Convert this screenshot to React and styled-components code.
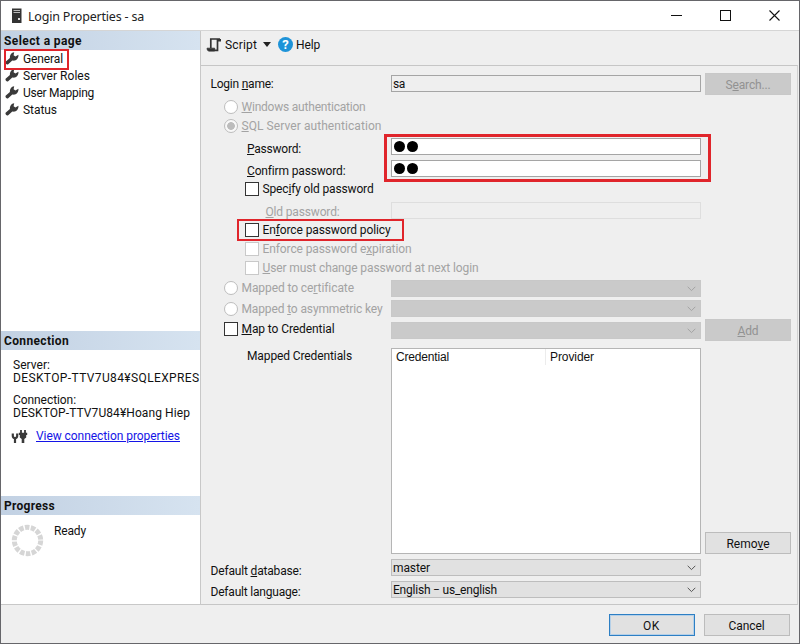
import React, { useLayoutEffect, useRef, useState } from 'react'
import styled, { createGlobalStyle } from 'styled-components'

const GlobalStyle = createGlobalStyle`
    * {
        box-sizing: border-box;
    }
    body {
        margin: 0;
        background: #5c5c5e;
        font-family: Roboto, "Liberation Sans", sans-serif;
        font-size: 12px;
        line-height: 14px;
        color: #111;
    }
    u {
        text-underline-offset: 1px;
    }
`

const Desktop = styled.div`
    width: 800px;
    height: 644px;
    padding: 1px;
    background: #66666a;
    overflow: hidden;
`

const Window = styled.div`
    height: 642px;
    background: #efefef;
    display: flex;
    flex-direction: column;
`

const TitleBar = styled.div`
    height: 30px;
    flex: none;
    background: #fff;
    border-bottom: 1px solid #d5d5d5;
    display: flex;
    align-items: center;
    padding-left: 10px;
`

const Title = styled.div`
    flex: 1;
    padding: 2px 0 0 6px;
    font-family: "Noto Sans", "Open Sans", sans-serif;
    font-size: 12.5px;
    color: #222;
`

const WindowButton = styled.div`
    width: 49px;
    height: 29px;
    display: flex;
    align-items: center;
    justify-content: center;
`

const Body = styled.div`
    height: 574px;
    flex: none;
    display: flex;
`

const Sidebar = styled.div`
    width: 200px;
    flex: none;
    background: #fff;
    border-right: 1px solid #c8c8c8;
    border-bottom: 1px solid #c8c8c8;
    display: flex;
    flex-direction: column;
    overflow: hidden;
`

const Section = styled.div`
    height: ${props => props.$h}px;
    flex: none;
`

const SectionTitle = styled.div`
    height: 19px;
    padding: 3px 0 0 3px;
    background: linear-gradient(90deg, #c2d1e3, #d6e3f0);
    font-weight: bold;
`

const PageItem = styled.div`
    position: relative;
    height: 17px;
    display: flex;
    align-items: center;
    padding-left: 4px;
    gap: 4px;
`

const ConnectionInfo = styled.div`
    padding: 9px 0 0 12px;
    line-height: 13px;
    white-space: nowrap;
`

const InfoBlock = styled.div`
    margin-bottom: 9px;
`

const InfoLine = styled.div`
    height: 13px;
`

const LinkRow = styled.div`
    display: flex;
    align-items: center;
    gap: 8px;
    margin-left: -2px;
`

const TextLink = styled.a`
    color: #1414e6;
    text-decoration: underline;
`

const ProgressInfo = styled.div`
    display: flex;
    padding: 9px 0 0 10px;
    gap: 10px;
`

const Content = styled.div`
    flex: 1;
    display: flex;
    flex-direction: column;
`

const Toolbar = styled.div`
    height: 34px;
    flex: none;
    display: flex;
    align-items: center;
    padding: 0 0 7px 5px;
`

const ToolText = styled.div`
    padding-left: 3px;
`

const Caret = styled.div`
    margin: 0 7px 0 6px;
    border: 4px solid transparent;
    border-top: 5px solid #222;
    border-bottom: 0;
`

const HelpIcon = styled.div`
    width: 15px;
    height: 15px;
    border-radius: 50%;
    background: #1e93d8;
    color: #fff;
    font-weight: bold;
    font-size: 13px;
    line-height: 15px;
    text-align: center;
`

const Form = styled.div`
    width: 597px;
    flex: 1;
    padding-top: 6px;
    border-top: 1px solid #c6c6c6;
    border-right: 1px solid #d2d2d2;
    border-bottom: 1px solid #c6c6c6;
`

const Row = styled.div`
    position: relative;
    height: ${props => props.$h}px;
    display: grid;
    grid-template-columns: 190px 310px 90px;
    align-items: ${props => props.$align || 'center'};
`

const Label = styled.div`
    display: flex;
    align-items: center;
    gap: 3.5px;
    padding-left: ${props => props.$indent}px;
    padding-top: ${props => props.$drop || 0}px;
    padding-bottom: ${props => props.$lift || 0}px;
    color: ${props => props.$disabled ? '#a3a3a3' : '#111'};
    white-space: nowrap;
`

const TableLabel = styled(Label)`
    align-self: start;
    padding-top: 8px;
`

const Radio = styled.span`
    width: 14px;
    height: 14px;
    flex: none;
    border: 1px solid #bdbdbd;
    border-radius: 50%;
    background: ${props => props.$checked ? 'radial-gradient(circle, #bcbcbc 3.5px, #f8f8f8 4.2px)' : '#fff'};
`

const Checkbox = styled.span`
    width: 14px;
    height: 14px;
    flex: none;
    border: 1px solid ${props => props.$disabled ? '#c9c9c9' : '#333'};
    background: #fff;
`

const Input = styled.div`
    height: 17px;
    padding-left: 1px;
    display: flex;
    align-items: center;
    border: 1px solid ${props => props.$faint ? '#dedede' : '#a5a5a5'};
    background: ${props => props.$editable ? '#fff' : '#efefef'};
`

const Dot = styled.span`
    width: 11px;
    height: 11px;
    margin: 0 1px;
    border-radius: 50%;
    background: #000;
`

const Select = styled.div`
    height: 17px;
    padding: 1px 4px 0 1px;
    display: flex;
    align-items: center;
    justify-content: space-between;
    border: 1px solid ${props => props.$disabled ? '#c8c8c8' : '#bdbdbd'};
    background: ${props => props.$disabled ? '#cacaca' : '#e1e1e1'};
`

const Button = styled.div`
    width: 86px;
    height: 22px;
    padding-top: 2px;
    display: flex;
    align-items: center;
    justify-content: center;
    border: 1px solid ${props => props.$disabled ? '#c8c8c8' : '#bcbcbc'};
    background: ${props => props.$disabled ? '#cacaca' : '#e1e1e1'};
    color: ${props => props.$disabled ? '#929292' : '#111'};
`

const SideButton = styled(Button)`
    margin-left: 4px;
`

const PrimaryButton = styled(Button)`
    border: 1px solid #2d7fc4;
    box-shadow: inset 0 0 0 1px #b5d0e8;
`

const Table = styled.div`
    height: 206px;
    display: grid;
    grid-template-columns: 154px 1fr;
    border: 1px solid #b5b5b5;
    background: #fff;
    font-family: "Liberation Sans", Arial, sans-serif;
`

const HeadCell = styled.div`
    height: 16px;
    padding: 1px 0 0 4px;
    border-right: 1px solid #ececec;

    &:last-child {
        border-right: 0;
    }
`

const Footer = styled.div`
    flex: 1;
    display: flex;
    justify-content: flex-end;
    padding: 9px 9.5px 0 0;
    gap: 9px;
`

const Marker = styled.div`
    position: absolute;
    left: ${props => props.$x}px;
    top: ${props => props.$y}px;
    width: ${props => props.$w}px;
    height: ${props => props.$h}px;
    border: ${props => props.$b || 2}px solid #e0252b;
    z-index: 1;
`

const Spaced = styled.span`
    white-space: nowrap;
`

// spreads the letters so that a caption takes the width given in w
const Text = ({ w, children }) => {
    const ref = useRef(null)
    const [spacing, setSpacing] = useState(0)

    useLayoutEffect(() => {
        const el = ref.current
        setSpacing((w - el.getBoundingClientRect().width) / el.textContent.length)
    }, [w])

    return <Spaced ref={ref} style={{ letterSpacing: spacing }}>{children}</Spaced>
}

const ServerIcon = () => (
    <svg width="11" height="16" viewBox="0 0 11 16">
        <rect x="1" y="0.5" width="9.5" height="14.5" fill="#333" />
        <path d="M2.5 2.5h6.5M2.5 4.5h6.5" stroke="#bbb" />
        <rect x="7" y="10" width="2" height="2" fill="#ddd" />
    </svg>
)

const WrenchIcon = () => (
    <svg width="14" height="14" viewBox="0 0 14 14">
        <path d="M2.3 10.6L7.2 6.2" stroke="#3a3a3a" strokeWidth="3.5" strokeLinecap="round" />
        <path d="M5.2 7C4.2 3.8 5.8 0.8 9.2 0.2L8.6 3.2L10.4 4.5L13.4 2.8C13.9 6.6 10.8 9.3 7.6 8.6Z" fill="#3a3a3a" />
    </svg>
)

const ScriptIcon = () => (
    <svg width="16" height="16" viewBox="0 0 16 16" fill="none" stroke="#333" strokeWidth="1.7">
        <path d="M4.8 11V2H14" />
        <path d="M11.5 2V13.4H3" />
        <path d="M1 11.2H8.7V14H2.6Q1 13.6 1 11.2Z" fill="#333" strokeWidth="0.8" />
        <path d="M12 2H15V4.5H12Z" fill="#333" stroke="none" />
    </svg>
)

const PlugIcon = () => (
    <svg width="17" height="15" viewBox="0 0 17 15">
        <path d="M1.8 4.5V7Q1.8 9 4 9Q6.2 9 6.2 7V4.5M4 9V14" fill="none" stroke="#3a3a3a" strokeWidth="2.2" />
        <path d="M10 1V5M14 1V5" stroke="#3a3a3a" strokeWidth="1.8" />
        <path d="M7.8 3.8H16.2V6H15.2V8.5L13.3 10V14H10.7V10L8.8 8.5V6H7.8Z" fill="#3a3a3a" />
    </svg>
)

const Spinner = () => (
    <svg width="33" height="33" viewBox="0 0 33 33">
        <circle cx="16.5" cy="16.5" r="13.2" fill="none" stroke="#d6d6d6" strokeWidth="5" strokeDasharray="4.5 1.424" />
    </svg>
)

const Chevron = ({ color = '#555' }) => (
    <svg width="9" height="6" viewBox="0 0 9 6">
        <path d="M0.7 0.8L4.5 4.6L8.3 0.8" fill="none" stroke={color} />
    </svg>
)

const pages = [
    { name: 'General', w: 40 },
    { name: 'Server Roles', w: 67 },
    { name: 'User Mapping', w: 71 },
    { name: 'Status', w: 34 },
]

const App = () => {
    return (
        <Desktop>
            <GlobalStyle />
            <Window>
                <TitleBar>
                    <ServerIcon />
                    <Title><Text w={116}>Login Properties - sa</Text></Title>
                    <WindowButton>
                        <svg width="11" height="11"><path d="M0 5.5H11" stroke="#111" /></svg>
                    </WindowButton>
                    <WindowButton>
                        <svg width="11" height="11"><rect x="0.5" y="0.5" width="10" height="10" fill="none" stroke="#111" /></svg>
                    </WindowButton>
                    <WindowButton>
                        <svg width="11" height="11"><path d="M0.5 0.5L10.5 10.5M10.5 0.5L0.5 10.5" stroke="#111" strokeWidth="1.1" /></svg>
                    </WindowButton>
                </TitleBar>
                <Body>
                    <Sidebar>
                        <Section $h={300}>
                            <SectionTitle><Text w={78}>Select a page</Text></SectionTitle>
                            {pages.map((page, i) => (
                                <PageItem key={page.name}>
                                    <WrenchIcon />
                                    <Text w={page.w}>{page.name}</Text>
                                    {i === 0 && <Marker $x={3} $y={-1} $w={65} $h={21} />}
                                </PageItem>
                            ))}
                        </Section>
                        <Section $h={165}>
                            <SectionTitle><Text w={65}>Connection</Text></SectionTitle>
                            <ConnectionInfo>
                                <InfoBlock>
                                    <InfoLine><Text w={37}>Server:</Text></InfoLine>
                                    <InfoLine><Text w={186.5}>DESKTOP-TTV7U84¥SQLEXPRES</Text></InfoLine>
                                </InfoBlock>
                                <InfoBlock>
                                    <InfoLine><Text w={63}>Connection:</Text></InfoLine>
                                    <InfoLine><Text w={177}>DESKTOP-TTV7U84¥Hoang Hiep</Text></InfoLine>
                                </InfoBlock>
                                <LinkRow>
                                    <PlugIcon />
                                    <TextLink><Text w={144}>View connection properties</Text></TextLink>
                                </LinkRow>
                            </ConnectionInfo>
                        </Section>
                        <Section $h={108}>
                            <SectionTitle><Text w={51}>Progress</Text></SectionTitle>
                            <ProgressInfo>
                                <Spinner />
                                <Text w={32}>Ready</Text>
                            </ProgressInfo>
                        </Section>
                    </Sidebar>
                    <Content>
                        <Toolbar>
                            <ScriptIcon />
                            <ToolText><Text w={32}>Script</Text></ToolText>
                            <Caret />
                            <HelpIcon>?</HelpIcon>
                            <ToolText><Text w={24}>Help</Text></ToolText>
                        </Toolbar>
                        <Form>
                            <Row $h={23}>
                                <Label $indent={9.5} $drop={1}><Text w={63}>Login <u>n</u>ame:</Text></Label>
                                <Input><Text w={12}>sa</Text></Input>
                                <SideButton $disabled><Text w={45}>S<u>e</u>arch...</Text></SideButton>
                            </Row>
                            <Row $h={21}>
                                <Label $indent={23} $drop={2} $disabled><Radio /><Text w={124}><u>W</u>indows authentication</Text></Label>
                            </Row>
                            <Row $h={19}>
                                <Label $indent={23} $disabled><Radio $checked /><Text w={140}><u>S</u>QL Server authentication</Text></Label>
                            </Row>
                            <Row $h={22}>
                                <Label $indent={46} $drop={6}><Text w={54}><u>P</u>assword:</Text></Label>
                                <Input $editable><Dot /><Dot /></Input>
                                <Marker $x={183} $y={-1} $w={327} $h={48} $b={3} />
                            </Row>
                            <Row $h={22}>
                                <Label $indent={46} $drop={6}><Text w={98}><u>C</u>onfirm password:</Text></Label>
                                <Input $editable><Dot /><Dot /></Input>
                            </Row>
                            <Row $h={20}>
                                <Label $indent={44}><Checkbox /><Text w={111}>Spec<u>i</u>fy old password</Text></Label>
                            </Row>
                            <Row $h={22}>
                                <Label $indent={64.5} $drop={4} $disabled><Text w={74}><u>O</u>ld password:</Text></Label>
                                <Input $faint />
                            </Row>
                            <Row $h={18}>
                                <Label $indent={44}><Checkbox /><Text w={128}>En<u>f</u>orce password policy</Text></Label>
                                <Marker $x={36} $y={-2} $w={167} $h={22} />
                            </Row>
                            <Row $h={19}>
                                <Label $indent={44} $disabled><Checkbox $disabled /><Text w={149}>Enforce password e<u>x</u>piration</Text></Label>
                            </Row>
                            <Row $h={20}>
                                <Label $indent={44} $disabled><Checkbox $disabled /><Text w={216}><u>U</u>ser must change password at next login</Text></Label>
                            </Row>
                            <Row $h={20}>
                                <Label $indent={23} $lift={1} $disabled><Radio /><Text w={112}>Mapped to ce<u>r</u>tificate</Text></Label>
                                <Select $disabled><span /><Chevron color="#a3a3a3" /></Select>
                            </Row>
                            <Row $h={21}>
                                <Label $indent={23} $disabled><Radio /><Text w={141}>Mapped <u>t</u>o asymmetric key</Text></Label>
                                <Select $disabled><span /><Chevron color="#a3a3a3" /></Select>
                            </Row>
                            <Row $h={22}>
                                <Label $indent={23} $lift={2}><Checkbox /><Text w={93}><u>M</u>ap to Credential</Text></Label>
                                <Select $disabled><span /><Chevron color="#a3a3a3" /></Select>
                                <SideButton $disabled><Text w={21}><u>A</u>dd</Text></SideButton>
                            </Row>
                            <Row $h={213} $align="end">
                                <TableLabel $indent={46}><Text w={105}>Mapped Credentials</Text></TableLabel>
                                <Table>
                                    <HeadCell><Text w={53}>Credential</Text></HeadCell>
                                    <HeadCell><Text w={44}>Provider</Text></HeadCell>
                                </Table>
                                <SideButton><Text w={43}>Remo<u>v</u>e</Text></SideButton>
                            </Row>
                            <Row $h={26}>
                                <Label $indent={9.5} $drop={7}><Text w={91}>Default <u>d</u>atabase:</Text></Label>
                                <Select><Text w={37}>master</Text><Chevron /></Select>
                            </Row>
                            <Row $h={18}>
                                <Label $indent={9.5} $drop={5}><Text w={90}>Default lan<u>g</u>uage:</Text></Label>
                                <Select><Text w={104}>English − us_english</Text><Chevron /></Select>
                            </Row>
                        </Form>
                    </Content>
                </Body>
                <Footer>
                    <PrimaryButton><Text w={17}>OK</Text></PrimaryButton>
                    <Button><Text w={36}>Cancel</Text></Button>
                </Footer>
            </Window>
        </Desktop>
    )
}

export default App
